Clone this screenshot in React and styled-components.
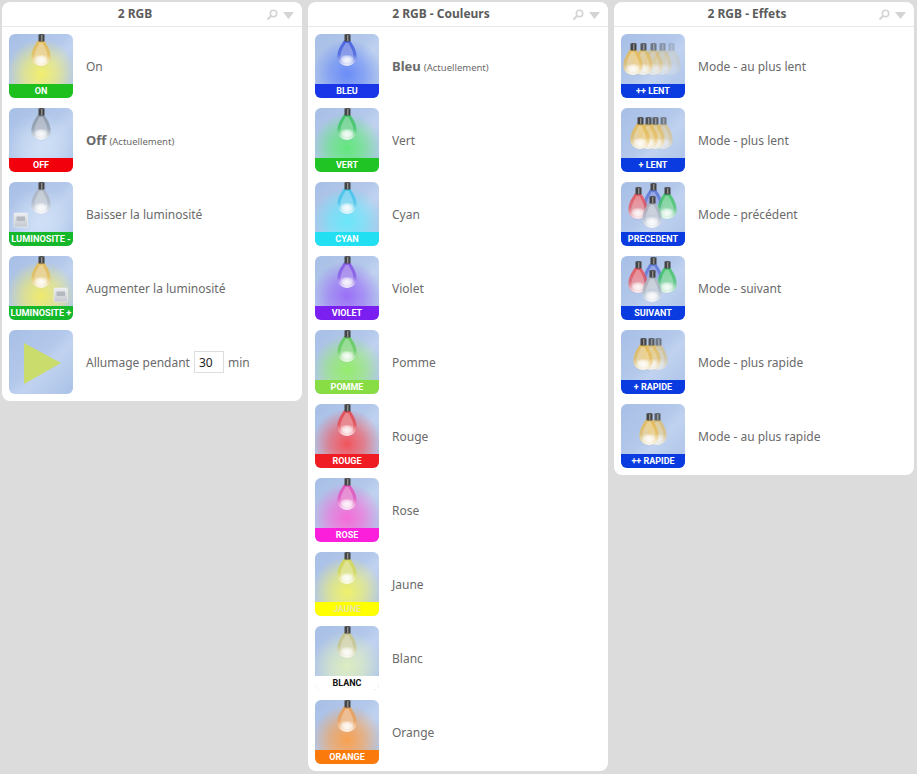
import React, { useId } from "react";
import styled, { createGlobalStyle } from "styled-components";

const GlobalStyle = createGlobalStyle`
  html, body {
    margin: 0;
    padding: 0;
    background: #dcdcdc;
    font-family: "Noto Sans", "Liberation Sans", sans-serif;
  }
`;

const Page = styled.div`
  display: flex;
  align-items: flex-start;
  gap: 6px;
  padding: 2px;
  width: 917px;
  height: 774px;
  box-sizing: border-box;
`;

const Panel = styled.section`
  width: 300px;
  background: #fff;
  border-radius: 8px;
  overflow: hidden;
`;

const Header = styled.header`
  position: relative;
  height: 24px;
  padding-right: 34px;
  border-bottom: 1px solid #e8e8e8;
  font-size: 12px;
  font-weight: 700;
  line-height: 24px;
  text-align: center;
  color: #5c5c5c;
`;

const HeaderIcons = styled.span`
  position: absolute;
  top: 7px;
  right: 8px;
  display: flex;
  align-items: center;
  gap: 5px;
`;

const RowList = styled.div`
  display: flex;
  flex-direction: column;
  gap: 10px;
  padding: 7px;
`;

const Row = styled.div`
  display: flex;
  align-items: center;
  gap: 13px;
  height: 64px;
`;

const Tile = styled.div`
  display: flex;
  flex-direction: column;
  flex: none;
  width: 64px;
  height: 64px;
  border-radius: 6px;
  overflow: hidden;
  background: linear-gradient(135deg, #a8bfe6 0%, #b3c8ea 45%, #c0d2ef 58%, #aac2e8 100%);
`;

const Art = styled.svg`
  display: block;
  flex: 1;
  width: 64px;
  min-height: 0;
`;

const Band = styled.div`
  flex: none;
  height: 14px;
  background: ${(p) => p.$color};
  color: ${(p) => p.$ink};
  font-family: "Roboto", "Liberation Sans", sans-serif;
  font-size: ${(p) => (p.$tight ? "9.2px" : "9px")};
  font-weight: 700;
  line-height: 14px;
  text-align: center;
  white-space: nowrap;
  overflow: hidden;
`;

const Label = styled.div`
  display: flex;
  align-items: center;
  gap: 4px;
  font-size: 12px;
  color: #6a6a6a;
`;

const Strong = styled.strong`
  font-size: 13px;
  font-weight: 700;
`;

const Note = styled.small`
  font-size: 9.5px;
`;

const MinutesInput = styled.input`
  width: 30px;
  height: 22px;
  box-sizing: border-box;
  padding: 2px 4px;
  border: 1px solid #ddd;
  background: #fff;
  color: #222;
  font-family: "Noto Sans", "Liberation Sans", sans-serif;
  font-size: 12px;
  outline: none;
`;

// the bulb, top of the cap at 0,0 and centred on x
const GLASS = "M-3 6.5C-5 10-9.5 15-9.5 23C-9.5 28.5-5 32 0 32C5 32 9.5 28.5 9.5 23C9.5 15 5 10 3 6.5Z";
const CORE = "M-1.5 9C-3 12-6.5 17-6.5 23C-6.5 27-3 29 0 29C3 29 6.5 27 6.5 23C6.5 17 3 12 1.5 9Z";

function Bulb({ x, y, tint, ids, opacity = 1 }) {
  return (
    <g transform={`translate(${x} ${y})`} opacity={opacity}>
      <path d={GLASS} fill={`url(#${ids.glass})`} stroke={tint} strokeOpacity=".3" strokeWidth=".5" />
      <path d={CORE} fill="#fff" opacity=".3" />
      <ellipse cx="0" cy="25.5" rx="7" ry="5" fill={`url(#${ids.shine})`} />
      <path d="M-2.5 0.5Q.5 -.5 3.5 0.5V7.5H-2.5Z" fill="#444" />
      <path d="M0 1H1.4V7H0Z" fill="#8e8e8e" />
    </g>
  );
}

function SwitchPlate({ x, y, gradient }) {
  return (
    <g>
      <rect x={x} y={y} width="13.5" height="14" rx="1" fill={`url(#${gradient})`} stroke="#f0f0f0" strokeWidth=".6" />
      <rect x={x + 2.5} y={y + 3.5} width="8.5" height="4.5" fill="#b4b8bf" />
    </g>
  );
}

function BulbArt({ bulbs = [], glow, plate }) {
  const id = useId();
  const glowId = `${id}-glow`;
  const shineId = `${id}-shine`;
  const plateId = `${id}-plate`;
  return (
    <Art viewBox="0 0 64 50" preserveAspectRatio="xMidYMin slice">
      <defs>
        {glow && (
          <radialGradient id={glowId} gradientUnits="userSpaceOnUse" cx="32" cy="40" r="35">
            <stop offset="0" stopColor={glow} stopOpacity="1" />
            <stop offset=".5" stopColor={glow} stopOpacity=".62" />
            <stop offset="1" stopColor={glow} stopOpacity="0" />
          </radialGradient>
        )}
        <radialGradient id={shineId}>
          <stop offset="0" stopColor="#fff" stopOpacity=".9" />
          <stop offset=".6" stopColor="#fff" stopOpacity=".55" />
          <stop offset="1" stopColor="#fff" stopOpacity="0" />
        </radialGradient>
        <linearGradient id={plateId} x1="0" y1="0" x2="0" y2="1">
          <stop offset="0" stopColor="#eceef0" />
          <stop offset="1" stopColor="#c4c8ce" />
        </linearGradient>
        {bulbs.map((b, i) => (
          <linearGradient key={i} id={`${id}-b${i}`} x1="0" y1="0" x2="0" y2="1">
            <stop offset="0" stopColor={b.tint} stopOpacity=".95" />
            <stop offset=".55" stopColor={b.tint} stopOpacity=".75" />
            <stop offset="1" stopColor="#fff" stopOpacity=".95" />
          </linearGradient>
        ))}
      </defs>
      {glow && <rect width="64" height="50" fill={`url(#${glowId})`} />}
      {bulbs.map((b, i) => (
        <Bulb key={i} {...b} ids={{ glass: `${id}-b${i}`, shine: shineId }} />
      ))}
      {plate && <SwitchPlate x={plate[0]} y={plate[1]} gradient={plateId} />}
    </Art>
  );
}

function PlayArt() {
  return (
    <Art viewBox="0 0 64 64">
      <path d="M15 13L52 33L15 54Z" fill="#c9dc6c" />
    </Art>
  );
}

const single = (tint) => [{ x: 32, y: 0, tint }];
const GOLD = "#e6bc58";
const trail = (xs, y, fades) => xs.map((x, i) => ({ x, y, tint: GOLD, opacity: fades[i] }));
const mixed = [
  { x: 32, y: 1, tint: "#5f78d8" },
  { x: 17, y: 5, tint: "#e6545c" },
  { x: 46, y: 5, tint: "#45c46a" },
  { x: 31, y: 14, tint: "#aab4c2" },
];

const GREEN = "#1ec01e";
const BLUE = "#0a3be0";

const panels = [
  {
    title: "2 RGB",
    rows: [
      { tag: "ON", color: GREEN, bulbs: single(GOLD), glow: "#f2ee6e", text: "On" },
      { tag: "OFF", color: "#f2000c", bulbs: single("#8d99a8"), glow: "#cfe0f6", text: "Off", current: true },
      {
        tag: "LUMINOSITE -",
        color: "#14b82a",
        tight: true,
        bulbs: single("#aeb6c0"),
        glow: "#cfe0f6",
        plate: [5, 31],
        text: "Baisser la luminosité",
      },
      {
        tag: "LUMINOSITE +",
        color: "#14b82a",
        tight: true,
        bulbs: single(GOLD),
        glow: "#eeea6c",
        plate: [45, 32],
        text: "Augmenter la luminosité",
      },
      { play: true, text: "Allumage pendant", minutes: 30 },
    ],
  },
  {
    title: "2 RGB - Couleurs",
    rows: [
      { tag: "BLEU", color: "#1a35e8", bulbs: single("#4660dc"), glow: "#6a8cf6", text: "Bleu", current: true },
      { tag: "VERT", color: "#20c424", bulbs: single("#3cc464"), glow: "#62e67c", text: "Vert" },
      { tag: "CYAN", color: "#22dff2", bulbs: single("#46c4ec"), glow: "#6ae6fa", text: "Cyan" },
      { tag: "VIOLET", color: "#7a1ff0", bulbs: single("#8458e4"), glow: "#9a70f6", text: "Violet" },
      { tag: "POMME", color: "#88dc44", bulbs: single("#62cc5a"), glow: "#94ec6c", text: "Pomme" },
      { tag: "ROUGE", color: "#f01c24", bulbs: single("#e44850"), glow: "#f2545c", text: "Rouge" },
      { tag: "ROSE", color: "#fb1fdc", bulbs: single("#e254bc"), glow: "#f46cd8", text: "Rose" },
      { tag: "JAUNE", color: "#ffff00", ink: "#e8e8a0", bulbs: single("#d4d854"), glow: "#eef06a", text: "Jaune" },
      { tag: "BLANC", color: "#ffffff", ink: "#111", bulbs: single("#c8c48a"), glow: "#dcecc0", text: "Blanc" },
      { tag: "ORANGE", color: "#fb7a0c", bulbs: single("#ec9e56"), glow: "#f8a050", text: "Orange" },
    ],
  },
  {
    title: "2 RGB - Effets",
    rows: [
      { tag: "++ LENT", color: BLUE, bulbs: trail([50, 41, 32, 22, 12], 9, [0.2, 0.4, 0.6, 0.85, 1]), text: "Mode - au plus lent" },
      { tag: "+ LENT", color: BLUE, bulbs: trail([42, 34, 27, 19], 9, [0.6, 0.8, 0.9, 1]), text: "Mode - plus lent" },
      { tag: "PRECEDENT", color: BLUE, bulbs: mixed, text: "Mode - précédent" },
      { tag: "SUIVANT", color: BLUE, bulbs: mixed, text: "Mode - suivant" },
      { tag: "+ RAPIDE", color: BLUE, bulbs: trail([37, 30, 22], 8, [0.6, 0.85, 1]), text: "Mode - plus rapide" },
      { tag: "++ RAPIDE", color: BLUE, bulbs: trail([36, 28], 9, [0.8, 1]), text: "Mode - au plus rapide" },
    ],
  },
];

function PanelRow({ row }) {
  return (
    <Row>
      <Tile>
        {row.play ? <PlayArt /> : <BulbArt bulbs={row.bulbs} glow={row.glow} plate={row.plate} />}
        {row.tag && (
          <Band $color={row.color} $ink={row.ink || "#fff"} $tight={row.tight}>
            {row.tag}
          </Band>
        )}
      </Tile>
      <Label>
        {row.current ? (
          <span>
            <Strong>{row.text}</Strong> <Note>(Actuellement)</Note>
          </span>
        ) : (
          <span>{row.text}</span>
        )}
        {row.minutes && (
          <>
            <MinutesInput defaultValue={row.minutes} />
            <span>min</span>
          </>
        )}
      </Label>
    </Row>
  );
}

export default function App() {
  return (
    <Page>
      <GlobalStyle />
      {panels.map((panel) => (
        <Panel key={panel.title}>
          <Header>
            {panel.title}
            <HeaderIcons>
              <svg width="12" height="12" viewBox="0 0 12 12" fill="none" stroke="#d4d4d4" strokeWidth="1.6">
                <circle cx="7.5" cy="4.5" r="3.2" />
                <path d="M5 7L1.5 10.5" strokeWidth="2" />
              </svg>
              <svg width="11" height="7" viewBox="0 0 11 7">
                <path d="M0 0H11L5.5 7Z" fill="#d4d4d4" />
              </svg>
            </HeaderIcons>
          </Header>
          <RowList>
            {panel.rows.map((row) => (
              <PanelRow key={row.text} row={row} />
            ))}
          </RowList>
        </Panel>
      ))}
    </Page>
  );
}
